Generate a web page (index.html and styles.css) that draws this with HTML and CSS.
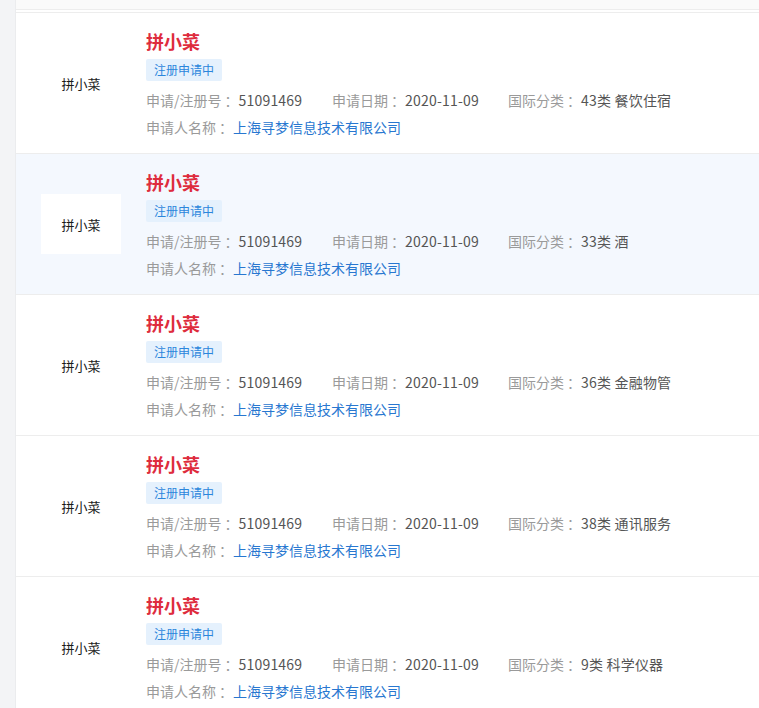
FILE: index.html
```html
<!DOCTYPE html>
<html lang="zh-CN">
<head>
<meta charset="utf-8">
<title>商标列表</title>
<link rel="stylesheet" href="styles.css">
</head>
<body>
<div class="page">
  <div class="sidebar"></div>
  <div class="main">
    <div class="top"></div>
    <ul class="list">
      <li class="item">
        <div class="logo">拼小菜</div>
        <div class="info">
          <div class="name">拼小菜</div>
          <span class="tag">注册申请中</span>
          <div class="meta">
            <span class="field f-no"><span class="label">申请/注册号<span class="colon">：</span></span><span class="value">51091469</span></span>
            <span class="field f-date"><span class="label">申请日期<span class="colon">：</span></span><span class="value">2020-11-09</span></span>
            <span class="field"><span class="label">国际分类<span class="colon">：</span></span><span class="value">43类 餐饮住宿</span></span>
          </div>
          <div class="owner"><span class="label">申请人名称<span class="colon">：</span></span><a class="link">上海寻梦信息技术有限公司</a></div>
        </div>
      </li>
      <li class="item active">
        <div class="logo">拼小菜</div>
        <div class="info">
          <div class="name">拼小菜</div>
          <span class="tag">注册申请中</span>
          <div class="meta">
            <span class="field f-no"><span class="label">申请/注册号<span class="colon">：</span></span><span class="value">51091469</span></span>
            <span class="field f-date"><span class="label">申请日期<span class="colon">：</span></span><span class="value">2020-11-09</span></span>
            <span class="field"><span class="label">国际分类<span class="colon">：</span></span><span class="value">33类 酒</span></span>
          </div>
          <div class="owner"><span class="label">申请人名称<span class="colon">：</span></span><a class="link">上海寻梦信息技术有限公司</a></div>
        </div>
      </li>
      <li class="item">
        <div class="logo">拼小菜</div>
        <div class="info">
          <div class="name">拼小菜</div>
          <span class="tag">注册申请中</span>
          <div class="meta">
            <span class="field f-no"><span class="label">申请/注册号<span class="colon">：</span></span><span class="value">51091469</span></span>
            <span class="field f-date"><span class="label">申请日期<span class="colon">：</span></span><span class="value">2020-11-09</span></span>
            <span class="field"><span class="label">国际分类<span class="colon">：</span></span><span class="value">36类 金融物管</span></span>
          </div>
          <div class="owner"><span class="label">申请人名称<span class="colon">：</span></span><a class="link">上海寻梦信息技术有限公司</a></div>
        </div>
      </li>
      <li class="item">
        <div class="logo">拼小菜</div>
        <div class="info">
          <div class="name">拼小菜</div>
          <span class="tag">注册申请中</span>
          <div class="meta">
            <span class="field f-no"><span class="label">申请/注册号<span class="colon">：</span></span><span class="value">51091469</span></span>
            <span class="field f-date"><span class="label">申请日期<span class="colon">：</span></span><span class="value">2020-11-09</span></span>
            <span class="field"><span class="label">国际分类<span class="colon">：</span></span><span class="value">38类 通讯服务</span></span>
          </div>
          <div class="owner"><span class="label">申请人名称<span class="colon">：</span></span><a class="link">上海寻梦信息技术有限公司</a></div>
        </div>
      </li>
      <li class="item">
        <div class="logo">拼小菜</div>
        <div class="info">
          <div class="name">拼小菜</div>
          <span class="tag">注册申请中</span>
          <div class="meta">
            <span class="field f-no"><span class="label">申请/注册号<span class="colon">：</span></span><span class="value">51091469</span></span>
            <span class="field f-date"><span class="label">申请日期<span class="colon">：</span></span><span class="value">2020-11-09</span></span>
            <span class="field"><span class="label">国际分类<span class="colon">：</span></span><span class="value">9类 科学仪器</span></span>
          </div>
          <div class="owner"><span class="label">申请人名称<span class="colon">：</span></span><a class="link">上海寻梦信息技术有限公司</a></div>
        </div>
      </li>
    </ul>
  </div>
</div>
</body>
</html>
```

FILE: styles.css
```css
html, body {
  margin: 0;
  padding: 0;
  background: #ffffff;
  font-family: "Noto Sans CJK SC", "Noto Sans", sans-serif;
  height: 708px;
  overflow: hidden;
}

.page {
  display: flex;
  align-items: stretch;
  min-height: 708px;
}

.sidebar {
  width: 15px;
  flex: none;
  background: #f3f4f6;
  border-right: 1px solid #ebecee;
}

.main {
  flex: 1;
  min-width: 0;
}

.top {
  height: 9px;
  background: #fafafa;
  border-bottom: 1px solid #ededed;
}

.list {
  list-style: none;
  margin: 2px 0 0;
  padding: 0;
  border-top: 1px solid #ededed;
}

.item {
  display: flex;
  align-items: center;
  height: 140px;
  border-bottom: 1px solid #ededed;
  padding-left: 25px;
  box-sizing: content-box;
  background: #ffffff;
}

.item.active {
  background: #f4f8fe;
}

.logo {
  width: 80px;
  height: 60px;
  flex: none;
  background: #ffffff;
  display: flex;
  align-items: center;
  justify-content: center;
  font-size: 13px;
  color: #1a1a1a;
  font-weight: 400;
  margin-right: 25px;
}

.info {
  display: flex;
  flex-direction: column;
  align-items: flex-start;
  align-self: flex-start;
  padding-top: 16px;
}

.name {
  font-size: 18px;
  line-height: 24px;
  font-weight: 700;
  color: #de2c3d;
}

.tag {
  margin-top: 6px;
  height: 22px;
  line-height: 22px;
  padding: 0 8px;
  font-size: 12px;
  color: #2b86dc;
  background: #e5f1fd;
  border-radius: 2px;
}

.meta {
  margin-top: 9px;
  display: flex;
  font-size: 14px;
  line-height: 20px;
}

.f-no {
  width: 186px;
}

.f-date {
  width: 176px;
}

.label {
  color: #9a9a9a;
}

.colon {
  margin-left: 3px;
}

.value {
  color: #555555;
  letter-spacing: 0.2px;
}

.owner {
  margin-top: 7px;
  font-size: 14px;
  line-height: 20px;
}

.link {
  color: #2877d0;
  text-decoration: none;
}
```
